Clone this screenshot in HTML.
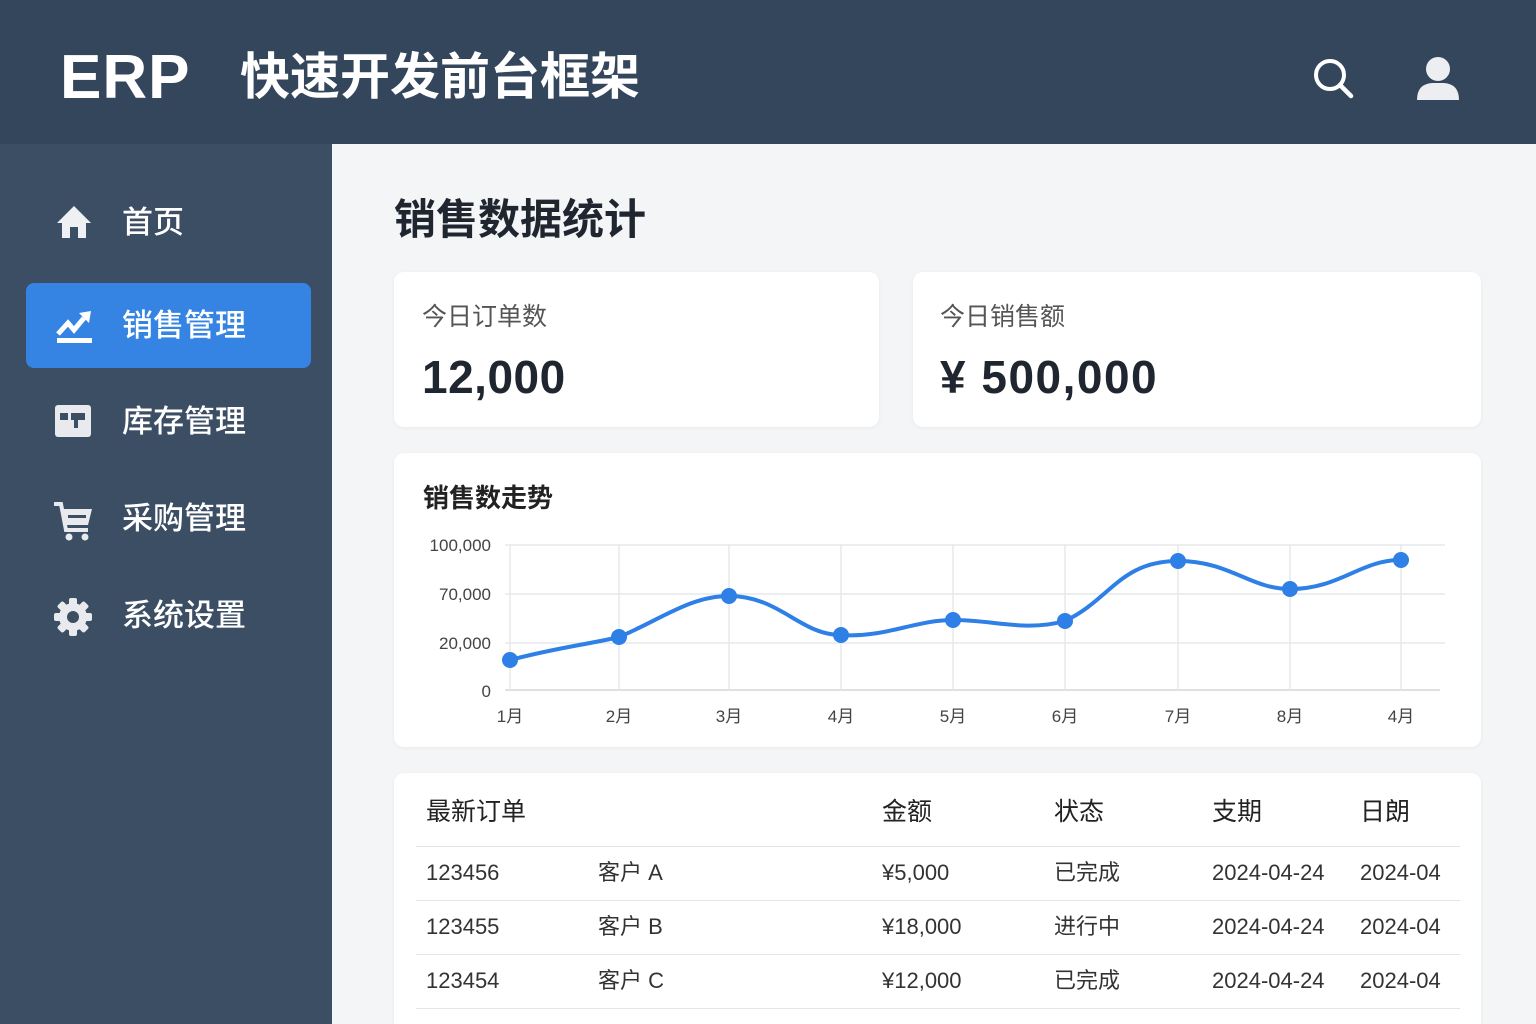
<!DOCTYPE html>
<html><head><meta charset="utf-8"><style>
*{margin:0;padding:0;box-sizing:border-box}
html,body{width:1536px;height:1024px;overflow:hidden}
body{background:#f3f5f7;font-family:"Liberation Sans","Noto Sans CJK SC",sans-serif;position:relative}
.hdr{position:absolute;left:0;top:0;width:1536px;height:144px;background:#34465c}
.side{position:absolute;left:0;top:144px;width:332px;height:880px;background:#3b4e64}
.abs{position:absolute;white-space:nowrap}
.nav{position:absolute;left:122px;font-size:31px;color:#fff;font-weight:500;line-height:40px}
.card{position:absolute;background:#fff;border-radius:10px;box-shadow:0 1px 4px rgba(0,0,0,.05)}
.t{position:absolute;font-size:22px;color:#333;white-space:nowrap;line-height:28px}
.line{position:absolute;left:416px;width:1044px;height:1px;background:#e3e5e8}
</style></head><body>
<div class="hdr"></div>
<div class="abs" style="left:60px;top:42px;font-size:62px;font-weight:700;color:#fff;letter-spacing:1px">ERP</div>
<div class="abs" style="left:240px;top:46px;font-size:50px;font-weight:700;color:#fff;line-height:62px">快速开发前台框架</div>
<svg class="abs" style="left:1310px;top:55px" width="46" height="46" viewBox="0 0 46 46"><circle cx="20" cy="20" r="14" fill="none" stroke="#fff" stroke-width="4"/><line x1="30" y1="30" x2="41" y2="41" stroke="#fff" stroke-width="4.5" stroke-linecap="round"/></svg>
<svg class="abs" style="left:1414px;top:54px" width="48" height="48" viewBox="0 0 48 48"><circle cx="24" cy="15" r="12" fill="#eceef2"/><path d="M3 46 Q3 30 18 29 L30 29 Q45 30 45 46 Z" fill="#eceef2"/></svg>
<div class="side"></div>
<div class="abs" style="left:26px;top:283px;width:285px;height:85px;background:#3584e4;border-radius:8px"></div>
<svg class="abs" style="left:56px;top:204px" width="36" height="36" viewBox="0 0 36 36"><path d="M18 2 L35 19 L30 19 L30 34 L22 34 L22 23 L14 23 L14 34 L6 34 L6 19 L1 19 Z" fill="#eef0f3"/></svg>
<div class="nav" style="top:203px">首页</div>
<svg class="abs" style="left:55px;top:308px" width="40" height="40" viewBox="0 0 40 40"><path d="M3 26 L13 15 L19 22 L29 10" fill="none" stroke="#fff" stroke-width="5"/><path d="M24 5 L36 3 L34 15 Z" fill="#fff"/><rect x="2" y="30" width="35" height="5" fill="#fff"/></svg>
<div class="nav" style="top:306px">销售管理</div>
<svg class="abs" style="left:55px;top:405px" width="36" height="32" viewBox="0 0 36 32"><rect x="0" y="0" width="36" height="32" rx="3" fill="#e8eaee"/><rect x="5" y="8" width="8" height="7" fill="#3b4e64"/><path d="M16 8 H30 V15 H23 V23 H19 V15 H16 Z" fill="#3b4e64"/></svg>
<div class="nav" style="top:402px">库存管理</div>
<svg class="abs" style="left:54px;top:500px" width="40" height="42" viewBox="0 0 40 42"><path d="M0 4 L7 4 L12 30 L34 30" fill="none" stroke="#e8eaee" stroke-width="4"/><path d="M9 9 L38 9 L34 25 L12 25 Z" fill="#e8eaee"/><rect x="14" y="15" width="18" height="3" fill="#3b4e64"/><circle cx="15" cy="37" r="3.5" fill="#e8eaee"/><circle cx="31" cy="37" r="3.5" fill="#e8eaee"/></svg>
<div class="nav" style="top:499px">采购管理</div>
<svg class="abs" style="left:54px;top:598px" width="38" height="38" viewBox="0 0 38 38"><g fill="#e8eaee" transform="translate(19 19)"><rect x="-4" y="-19" width="8" height="38" rx="2"/><rect x="-4" y="-19" width="8" height="38" rx="2" transform="rotate(45)"/><rect x="-4" y="-19" width="8" height="38" rx="2" transform="rotate(90)"/><rect x="-4" y="-19" width="8" height="38" rx="2" transform="rotate(135)"/><circle r="14"/></g><circle cx="19" cy="19" r="6" fill="#3b4e64"/></svg>
<div class="nav" style="top:596px">系统设置</div>

<div class="abs" style="left:394px;top:192px;font-size:42px;font-weight:700;color:#1f2630;line-height:56px">销售数据统计</div>
<div class="card" style="left:394px;top:272px;width:485px;height:155px"></div>
<div class="abs" style="left:422px;top:300px;font-size:25px;color:#555;line-height:34px">今日订单数</div>
<div class="abs" style="left:422px;top:350px;font-size:46px;font-weight:700;color:#1f2630;letter-spacing:0.5px">12,000</div>
<div class="card" style="left:913px;top:272px;width:568px;height:155px"></div>
<div class="abs" style="left:940px;top:300px;font-size:25px;color:#555;line-height:34px">今日销售额</div>
<div class="abs" style="left:940px;top:350px;font-size:46px;font-weight:700;color:#1f2630;letter-spacing:1.5px">¥ 500,000</div>

<div class="card" style="left:394px;top:453px;width:1087px;height:294px"></div>
<div class="abs" style="left:423px;top:480px;font-size:26px;font-weight:700;color:#222;line-height:36px">销售数走势</div>
<svg class="abs" style="left:0;top:0" width="1536" height="1024">
<g stroke="#e6e8eb" stroke-width="1.5">
<line x1="505" y1="545" x2="1445" y2="545"/><line x1="505" y1="594" x2="1445" y2="594"/><line x1="505" y1="643" x2="1445" y2="643"/><line x1="505" y1="690" x2="1440" y2="690" stroke="#dde0e4" stroke-width="2"/>
<line x1="510" y1="545" x2="510" y2="690"/><line x1="619" y1="545" x2="619" y2="690"/><line x1="729" y1="545" x2="729" y2="690"/><line x1="841" y1="545" x2="841" y2="690"/><line x1="953" y1="545" x2="953" y2="690"/><line x1="1065" y1="545" x2="1065" y2="690"/><line x1="1178" y1="545" x2="1178" y2="690"/><line x1="1290" y1="545" x2="1290" y2="690"/><line x1="1401" y1="545" x2="1401" y2="690"/>
</g>
<path d="M510 660 C560 647 585 645 619 637 C660 620 690 596 729 596 C780 596 800 635 841 635 C885 638 915 620 953 620 C995 620 1025 632 1065 621 C1110 600 1120 561 1178 561 C1230 561 1250 589 1290 589 C1340 589 1360 560 1401 560" fill="none" stroke="#2e7fe6" stroke-width="4"/>
<g fill="#2e7fe6"><circle cx="510" cy="660" r="8"/><circle cx="619" cy="637" r="8"/><circle cx="729" cy="596" r="8"/><circle cx="841" cy="635" r="8"/><circle cx="953" cy="620" r="8"/><circle cx="1065" cy="621" r="8"/><circle cx="1178" cy="561" r="8"/><circle cx="1290" cy="589" r="8"/><circle cx="1401" cy="560" r="8"/></g>
<g font-family="Liberation Sans,Noto Sans CJK SC,sans-serif" font-size="17" fill="#444" text-anchor="end">
<text x="491" y="551">100,000</text><text x="491" y="600">70,000</text><text x="491" y="649">20,000</text><text x="491" y="697">0</text></g>
<g font-family="Liberation Sans,Noto Sans CJK SC,sans-serif" font-size="17" fill="#444" text-anchor="middle">
<text x="510" y="722">1月</text><text x="619" y="722">2月</text><text x="729" y="722">3月</text><text x="841" y="722">4月</text><text x="953" y="722">5月</text><text x="1065" y="722">6月</text><text x="1178" y="722">7月</text><text x="1290" y="722">8月</text><text x="1401" y="722">4月</text></g>
</svg>

<div class="card" style="left:394px;top:773px;width:1087px;height:251px;border-radius:10px 10px 0 0"></div>
<div class="t" style="left:426px;top:796px;font-size:25px;color:#222;line-height:32px">最新订单</div>
<div class="t" style="left:882px;top:796px;font-size:25px;color:#222;line-height:32px">金额</div>
<div class="t" style="left:1054px;top:796px;font-size:25px;color:#222;line-height:32px">状态</div>
<div class="t" style="left:1212px;top:796px;font-size:25px;color:#222;line-height:32px">支期</div>
<div class="t" style="left:1360px;top:796px;font-size:25px;color:#222;line-height:32px">日朗</div>
<div class="line" style="top:846px"></div>
<div class="t" style="left:426px;top:859px">123456</div><div class="t" style="left:598px;top:859px">客户 A</div><div class="t" style="left:882px;top:859px">¥5,000</div><div class="t" style="left:1054px;top:859px">已完成</div><div class="t" style="left:1212px;top:859px">2024-04-24</div><div class="t" style="left:1360px;top:859px">2024-04</div>
<div class="line" style="top:900px"></div>
<div class="t" style="left:426px;top:913px">123455</div><div class="t" style="left:598px;top:913px">客户 B</div><div class="t" style="left:882px;top:913px">¥18,000</div><div class="t" style="left:1054px;top:913px">进行中</div><div class="t" style="left:1212px;top:913px">2024-04-24</div><div class="t" style="left:1360px;top:913px">2024-04</div>
<div class="line" style="top:954px"></div>
<div class="t" style="left:426px;top:967px">123454</div><div class="t" style="left:598px;top:967px">客户 C</div><div class="t" style="left:882px;top:967px">¥12,000</div><div class="t" style="left:1054px;top:967px">已完成</div><div class="t" style="left:1212px;top:967px">2024-04-24</div><div class="t" style="left:1360px;top:967px">2024-04</div>
<div class="line" style="top:1008px"></div>
</body></html>
